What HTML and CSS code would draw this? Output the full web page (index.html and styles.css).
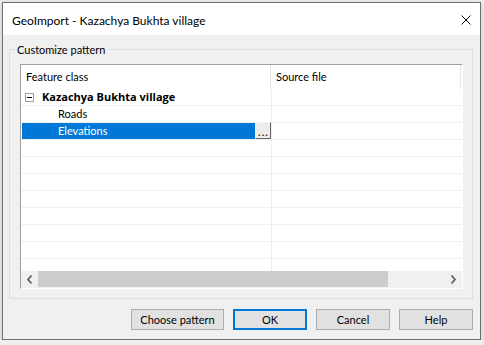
FILE: index.html
```html
<!DOCTYPE html>
<html lang="en">
<head>
<meta charset="utf-8">
<title>GeoImport</title>
<link rel="stylesheet" href="styles.css">
</head>
<body>
<div class="window">
  <div class="titlebar">
    <span class="title">GeoImport - Kazachya Bukhta village</span>
    <svg class="close" width="10" height="10" viewBox="0 0 10 10"><path d="M0.5 0.5 L9.5 9.5 M9.5 0.5 L0.5 9.5" stroke="#000" stroke-width="1" fill="none"/></svg>
  </div>
  <div class="client">
    <fieldset class="group">
      <legend>Customize pattern</legend>
      <div class="list">
        <div class="header">
          <div class="hcell hc1">Feature class</div>
          <div class="hcell hc2">Source file</div>
          <div class="hrest"></div>
        </div>
        <div class="rows">
          <div class="row">
            <div class="cell c1 tree">
              <svg class="toggle" width="9" height="9" viewBox="0 0 9 9"><rect x="0.5" y="0.5" width="8" height="8" fill="#fff" stroke="#a0a0a0"/><path d="M2 4.5 H7" stroke="#000" stroke-width="1"/></svg>
              <span class="bold">Kazachya Bukhta village</span>
            </div>
            <div class="cell c2"></div>
          </div>
          <div class="row">
            <div class="cell c1 leaf">Roads</div>
            <div class="cell c2"></div>
          </div>
          <div class="row">
            <div class="cell c1 selrow">
              <span class="sel">Elevations</span>
              <span class="ellipsis">...</span>
            </div>
            <div class="cell c2"></div>
          </div>
          <div class="row"><div class="cell c1"></div><div class="cell c2"></div></div>
          <div class="row"><div class="cell c1"></div><div class="cell c2"></div></div>
          <div class="row"><div class="cell c1"></div><div class="cell c2"></div></div>
          <div class="row"><div class="cell c1"></div><div class="cell c2"></div></div>
          <div class="row"><div class="cell c1"></div><div class="cell c2"></div></div>
          <div class="row"><div class="cell c1"></div><div class="cell c2"></div></div>
          <div class="row"><div class="cell c1"></div><div class="cell c2"></div></div>
          <div class="row"><div class="cell c1"></div><div class="cell c2"></div></div>
        </div>
        <div class="hscroll">
          <div class="arrow"><svg width="17" height="17" viewBox="0 0 17 17"><path d="M10.5 4.5 L7 8.5 L10.5 12.5" stroke="#606060" stroke-width="1.8" fill="none"/></svg></div>
          <div class="track"><div class="thumb"></div></div>
          <div class="arrow"><svg width="17" height="17" viewBox="0 0 17 17"><path d="M6.5 4.5 L10 8.5 L6.5 12.5" stroke="#606060" stroke-width="1.8" fill="none"/></svg></div>
        </div>
      </div>
    </fieldset>
    <div class="buttons">
      <button class="btn wide">Choose pattern</button>
      <button class="btn default">OK</button>
      <button class="btn">Cancel</button>
      <button class="btn">Help</button>
    </div>
  </div>
</div>
</body>
</html>
```
FILE: styles.css
```css
html, body {
  margin: 0;
  background: #eeeeee;
}
body {
  padding: 2px 0 0 2px;
  font-family: "Lato", "Liberation Sans", sans-serif;
  font-size: 11px;
  color: #000;
}
.window {
  box-sizing: border-box;
  width: 479px;
  height: 338px;
  border: 1px solid #707070;
  background: #f0f0f0;
  display: flex;
  flex-direction: column;
  box-shadow: 0 2px 6px rgba(0, 0, 0, 0.18);
}
.titlebar {
  height: 32px;
  background: #fff;
  display: flex;
  align-items: center;
  justify-content: space-between;
  padding: 2px 9px 0 9px;
  box-sizing: border-box;
}
.title {
  font-size: 12px;
}
.close {
  display: block;
  margin-top: -1px;
}
.client {
  flex: 1;
  padding: 7px 7px 9px 6px;
  display: flex;
  flex-direction: column;
}
.group {
  margin: 0;
  padding: 0 9px 9px 10px;
  border: 1px solid #dcdcdc;
  min-width: 0;
}
.group legend {
  padding: 0 2px;
  margin-left: -5px;
  line-height: 15px;
}
.list {
  margin-top: 7px;
  box-sizing: border-box;
  height: 225px;
  background: #fff;
  border-top: 1px solid #a0a0a0;
  border-left: 1px solid #a0a0a0;
  border-right: 1px solid #fff;
  border-bottom: 1px solid #fff;
  display: flex;
  flex-direction: column;
}
.header {
  height: 24px;
  display: flex;
}
.hcell {
  box-sizing: border-box;
  padding-left: 5px;
  line-height: 24px;
  border-right: 1px solid #e5e5e5;
}
.hc1 { width: 250px; }
.hc2 { width: 190px; }
.hrest { flex: 1; }
.rows {
  height: 182px;
  overflow: hidden;
}
.row {
  box-sizing: border-box;
  height: 17px;
  border-bottom: 1px solid #f0f0f0;
  display: flex;
}
.cell {
  box-sizing: border-box;
  line-height: 16px;
  height: 16px;
}
.c1 {
  width: 251px;
  border-right: 1px solid #f0f0f0;
  display: flex;
  align-items: center;
}
.c2 { flex: 1; }
.tree { padding-left: 4px; }
.toggle {
  display: block;
  margin-right: 8px;
}
.bold {
  font-family: "Open Sans", "Lato", sans-serif;
  font-weight: bold;
  font-size: 11px;
}
.leaf { padding-left: 37px; }
.selrow { padding-left: 1px; align-items: stretch; }
.sel {
  flex: 1;
  background: #0078d7;
  color: #fff;
  padding-left: 36px;
}
.ellipsis {
  box-sizing: border-box;
  width: 16px;
  height: 17px;
  margin-top: -1px;
  background: #ececec;
  border-top: 1px solid #f4f4f4;
  border-left: 1px solid #f4f4f4;
  border-right: 1px solid #646464;
  border-bottom: 1px solid #646464;
  font-size: 11px;
  line-height: 17px;
  text-align: center;
  letter-spacing: 1px;
  padding-left: 1px;
}
.hscroll {
  height: 17px;
  display: flex;
  background: #f0f0f0;
}
.arrow {
  width: 17px;
  height: 17px;
}
.arrow svg { display: block; }
.track {
  flex: 1;
}
.thumb {
  width: 350px;
  height: 16px;
  background: #cdcdcd;
}
.buttons {
  margin-top: 10px;
  display: flex;
  justify-content: flex-end;
  gap: 9px;
}
.btn {
  box-sizing: border-box;
  width: 74px;
  height: 21px;
  border: 1px solid #adadad;
  background: #e1e1e1;
  font-family: "Lato", "Liberation Sans", sans-serif;
  font-size: 11px;
  color: #000;
  padding: 0;
  margin: 0;
}
.btn.wide { width: 93px; }
.btn.default { border: 2px solid #0078d7; }
```
